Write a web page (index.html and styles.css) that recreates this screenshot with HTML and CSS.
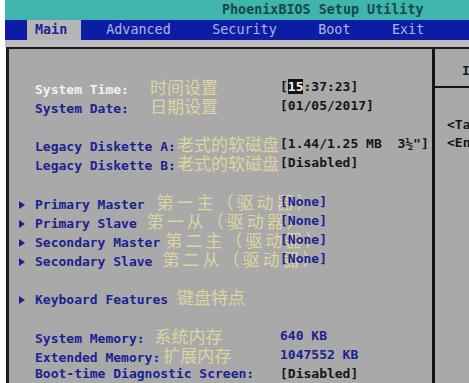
FILE: index.html
```html
<!DOCTYPE html>
<html lang="zh">

<head>
    <meta charset="UTF-8">
    <meta name="viewport" content="width=device-width, initial-scale=1.0">
    <title>PhoenixBIOS Setup Utility</title>
    <link rel="stylesheet" href="styles.css">
</head>

<body>
    <header class="title-bar">
        <span class="title">PhoenixBIOS Setup Utility</span>
    </header>
    <nav class="menu-bar">
        <span class="tab active">Main</span>
        <span class="tab">Advanced</span>
        <span class="tab">Security</span>
        <span class="tab">Boot</span>
        <span class="tab">Exit</span>
    </nav>
    <div class="gap"></div>

    <section class="panel">
        <div class="fields">
            <div class="row">
                <span class="label sel">System Time:<span class="cn cn-21">时间设置</span></span>
                <span class="value dark">[<b class="cursor">15</b>:37:23]</span>
            </div>
            <div class="row">
                <span class="label">System Date:<span class="cn cn-21">日期设置</span></span>
                <span class="value dark">[01/05/2017]</span>
            </div>
            <div class="row blank"></div>
            <div class="row">
                <span class="label">Legacy Diskette A:<span class="cn cn-1">老式的软磁盘</span></span>
                <span class="value dark">[1.44/1.25 MB&nbsp;&nbsp;3½"]</span>
            </div>
            <div class="row">
                <span class="label">Legacy Diskette B:<span class="cn cn-1">老式的软磁盘</span></span>
                <span class="value dark">[Disabled]</span>
            </div>
            <div class="row blank"></div>
            <div class="row">
                <span class="label sub">Primary Master<span class="cn ide cn-12">第一主（驱动器）</span></span>
                <span class="value">[None]</span>
            </div>
            <div class="row">
                <span class="label sub">Primary Slave<span class="cn ide cn-10">第一从（驱动器）</span></span>
                <span class="value">[None]</span>
            </div>
            <div class="row">
                <span class="label sub">Secondary Master<span class="cn ide cn-5">第二主（驱动器）</span></span>
                <span class="value">[None]</span>
            </div>
            <div class="row">
                <span class="label sub">Secondary Slave<span class="cn ide cn-10">第二从（驱动器）</span></span>
                <span class="value">[None]</span>
            </div>
            <div class="row blank"></div>
            <div class="row">
                <span class="label sub">Keyboard Features<span class="cn cn-9">键盘特点</span></span>
            </div>
            <div class="row blank"></div>
            <div class="row">
                <span class="label">System Memory:<span class="cn cn-10">系统内存</span></span>
                <span class="value">640 KB</span>
            </div>
            <div class="row">
                <span class="label">Extended Memory:<span class="cn cn-3">扩展内存</span></span>
                <span class="value">1047552 KB</span>
            </div>
            <div class="row">
                <span class="label">Boot-time Diagnostic Screen:</span>
                <span class="value dark">[Disabled]</span>
            </div>
        </div>

        <aside class="help">
            <div class="help-head">Item Specific Help</div>
            <div class="help-body">
                <p>&lt;Tab&gt;, &lt;Shift-Tab&gt;, or</p>
                <p>&lt;Enter&gt; selects field.</p>
            </div>
        </aside>
    </section>
</body>

</html>
```

FILE: styles.css
```css
html {
    box-sizing: border-box;
    font-family: "DejaVu Sans Mono", "Liberation Mono", monospace;
    font-size: 13px;
}

*,
*:before,
*:after {
    box-sizing: inherit;
}

body {
    margin: 0;
    width: 469px;
    height: 383px;
    overflow: hidden;
    background-color: #fff;
    padding-left: 5px;
    display: flex;
    flex-direction: column;
}

.title-bar {
    height: 20px;
    background-color: #3fb5ad;
    padding-left: 217px;
    display: flex;
    align-items: center;
}

.title {
    font-size: 13.4px;
    font-weight: bold;
    color: #164a48;
    white-space: nowrap;
}

.menu-bar {
    height: 20px;
    background-color: #0d1ca4;
    padding-left: 22px;
    display: flex;
    align-items: stretch;
    gap: 41.5px;
    font-size: 13.4px;
    white-space: nowrap;
}

.tab {
    display: flex;
    align-items: center;
    color: #aeb6e6;
}

.tab.active {
    background-color: #b5b5b5;
    color: #1b2596;
    font-weight: bold;
    padding: 0 14px 0 8px;
    margin-right: -16.5px;
}

.gap {
    height: 7px;
    background-color: #bcbcbc;
}

.panel {
    flex-grow: 1;
    display: flex;
    background-color: #a9a9a9;
    border-top: 2px solid #1c1c1c;
    border-left: 3px solid #1c1c1c;
    margin-left: 1px;
}

.fields {
    width: 426px;
    padding: 28px 0 0 26px;
    border-right: 3px solid #141414;
    flex-shrink: 0;
}

.row {
    display: grid;
    grid-template-columns: 245px auto;
    height: 19.15px;
    line-height: 19.15px;
    white-space: nowrap;
    font-weight: bold;
}

.label {
    color: #1b2290;
}

.label.sel {
    color: #f2f2f2;
}

.label.sub::before {
    content: "";
    display: inline-block;
    border-left: 6px solid #1b2290;
    border-top: 4px solid transparent;
    border-bottom: 4px solid transparent;
    margin-left: -16px;
    margin-right: 10px;
}

.cn {
    font-family: "Noto Sans CJK SC", sans-serif;
    font-weight: normal;
    font-size: 17px;
    color: #ddd59e;
}

.cn.ide {
    letter-spacing: 3px;
}

.cn-1 { margin-left: 1px; }
.cn-3 { margin-left: 3px; }
.cn-5 { margin-left: 5px; }
.cn-9 { margin-left: 9px; }
.cn-10 { margin-left: 10px; }
.cn-12 { margin-left: 12px; }
.cn-21 { margin-left: 21px; }

.value {
    color: #1b2290;
}

.value.dark {
    color: #161616;
}

.cursor {
    background-color: #111;
    color: #f4f4f4;
}

.help {
    flex-grow: 1;
    overflow: hidden;
    color: #161616;
    font-weight: bold;
    white-space: nowrap;
}

.help-head {
    height: 39px;
    padding: 12px 0 0 27px;
    line-height: 19px;
    border-bottom: 2px solid #141414;
}

.help-body {
    padding: 28px 0 0 12px;
}

.help-body p {
    margin: 0;
    line-height: 18.5px;
}
```
